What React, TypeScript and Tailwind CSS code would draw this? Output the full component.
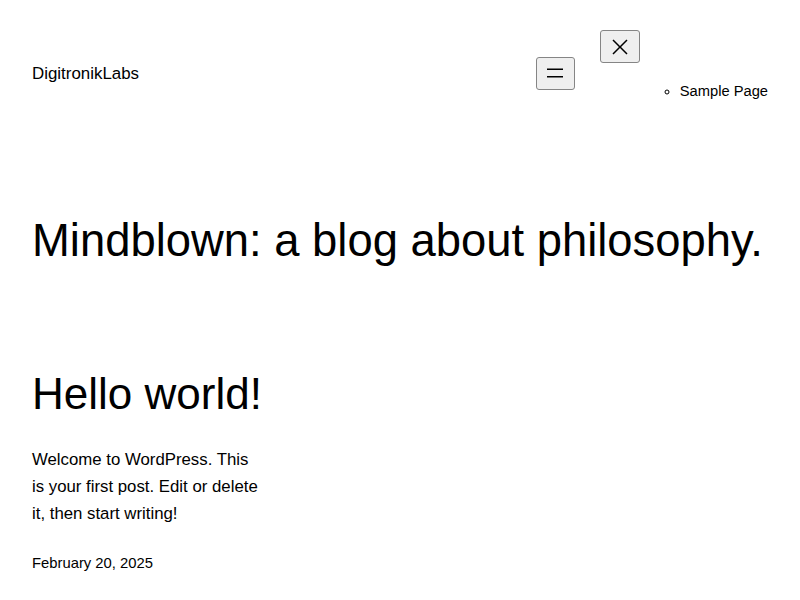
import React from 'react';

const MenuIcon = () => (
  <svg width="24" height="24" viewBox="0 0 24 24" fill="currentColor" aria-hidden="true">
    <rect x="4" y="7.5" width="16" height="1.5" />
    <rect x="4" y="15" width="16" height="1.5" />
  </svg>
);

const CloseIcon = () => (
  <svg width="24" height="24" viewBox="0 0 24 24" fill="currentColor" aria-hidden="true">
    <path d="m13.06 12 6.47-6.47-1.06-1.06L12 10.94 5.53 4.47 4.47 5.53 10.94 12l-6.47 6.47 1.06 1.06L12 13.06l6.47 6.47 1.06-1.06L13.06 12Z" />
  </svg>
);

export default function App() {
  return (
    <div className="min-h-screen bg-white text-black font-['Liberation_Sans',Arial,sans-serif]">
      <header className="flex items-center justify-between px-8 pt-[30px]">
        <p className="mt-[1px] text-[16.9px] leading-[1.4]">DigitronikLabs</p>
        <nav className="flex items-center gap-[25px]">
          <button className="flex h-[33px] w-[39px] items-center justify-center rounded-[3px] border border-[#858585] bg-[#efefef]">
            <MenuIcon />
          </button>
          <div className="flex flex-col items-start">
            <button className="flex h-[33px] w-[40px] items-center justify-center rounded-[3px] border border-[#858585] bg-[#efefef]">
              <CloseIcon />
            </button>
            <ul className="ml-[40px] mt-[17px] mb-[13px] list-[circle] pl-[40px] text-[14.7px] leading-[1.6]">
              <li>Sample Page</li>
            </ul>
          </div>
        </nav>
      </header>

      <main className="px-8">
        <h1 className="mt-[97px] text-[45.4px] leading-[1.2]">Mindblown: a blog about philosophy.</h1>

        <article className="mt-[100px]">
          <h2 className="text-[44px] leading-[1.2]">Hello world!</h2>
          <p className="mt-[25px] w-[230px] text-[16.8px] leading-[1.62]">
            Welcome to WordPress. This is your first post. Edit or delete it, then start writing!
          </p>
          <p className="mt-[26px] text-[14.8px] leading-[1.4]">February 20, 2025</p>
        </article>
      </main>
    </div>
  );
}
